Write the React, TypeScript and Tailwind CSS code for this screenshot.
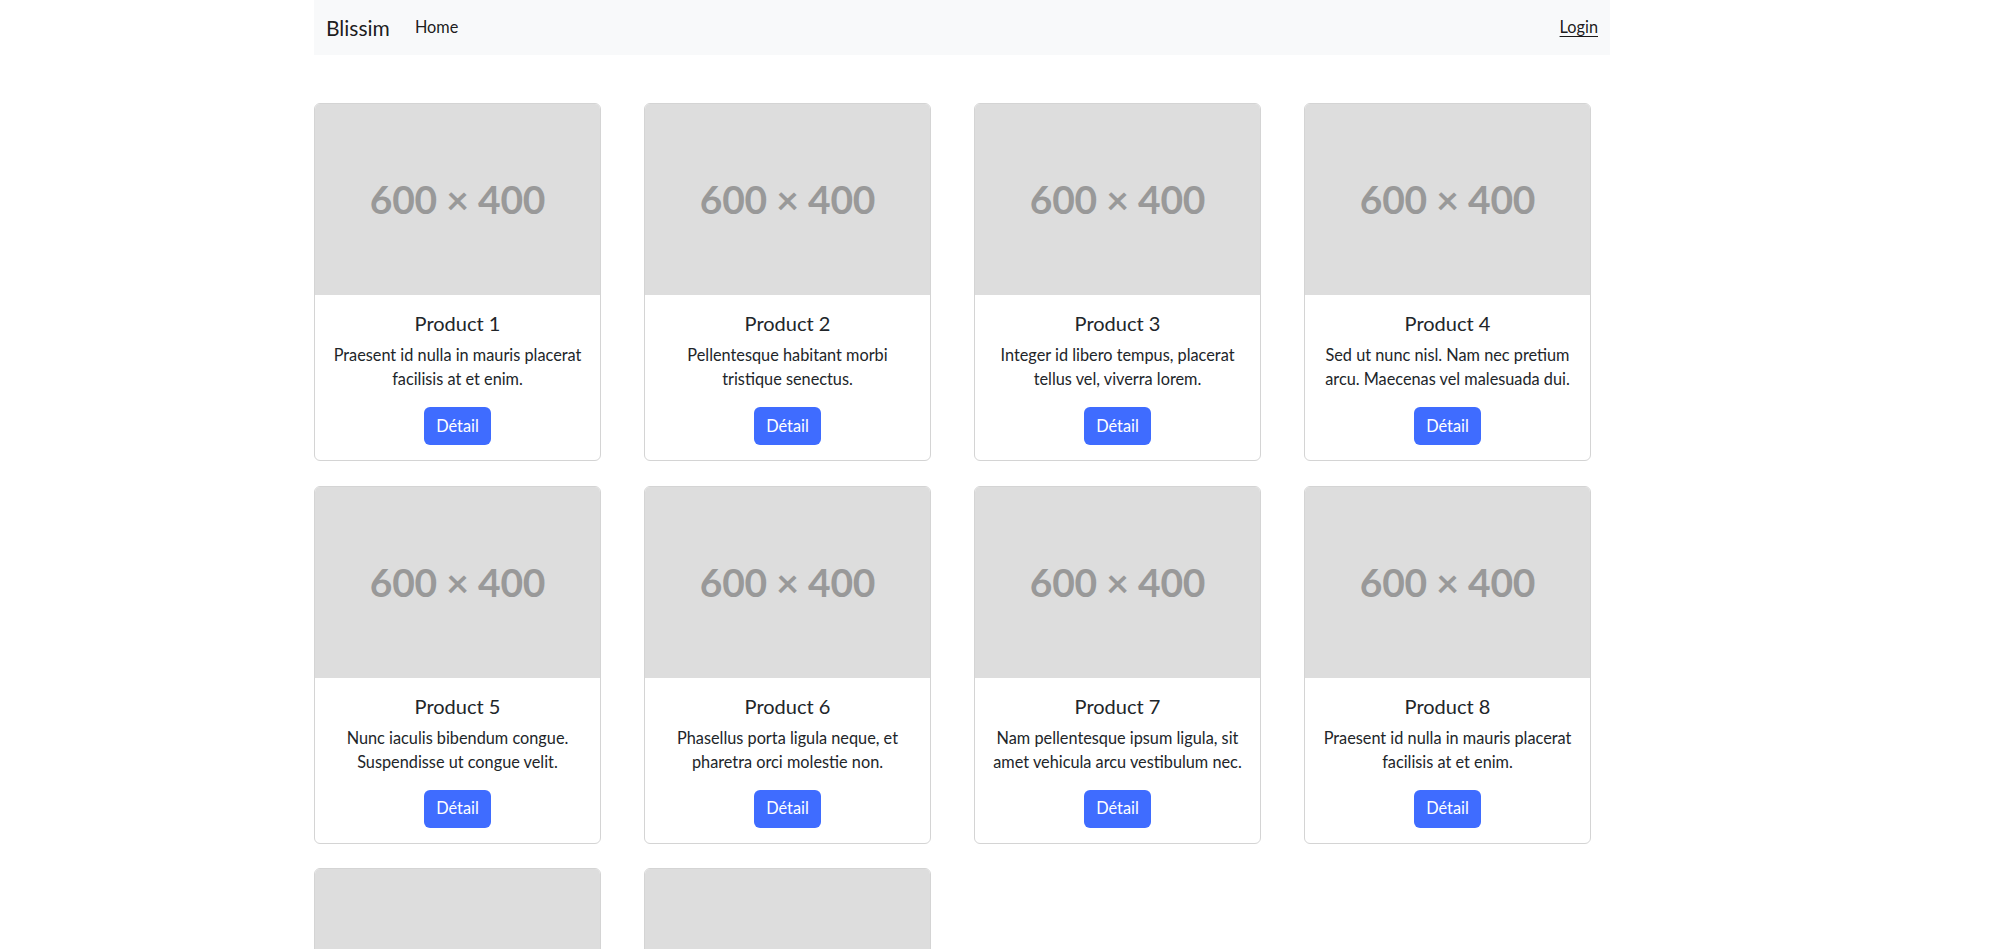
import React from "react";

const products = [
  { id: 1, name: "Product 1", text: "Praesent id nulla in mauris placerat facilisis at et enim." },
  { id: 2, name: "Product 2", text: "Pellentesque habitant morbi tristique senectus." },
  { id: 3, name: "Product 3", text: "Integer id libero tempus, placerat tellus vel, viverra lorem." },
  { id: 4, name: "Product 4", text: "Sed ut nunc nisl. Nam nec pretium arcu. Maecenas vel malesuada dui." },
  { id: 5, name: "Product 5", text: "Nunc iaculis bibendum congue. Suspendisse ut congue velit." },
  { id: 6, name: "Product 6", text: "Phasellus porta ligula neque, et pharetra orci molestie non." },
  { id: 7, name: "Product 7", text: "Nam pellentesque ipsum ligula, sit amet vehicula arcu vestibulum nec." },
  { id: 8, name: "Product 8", text: "Praesent id nulla in mauris placerat facilisis at et enim." },
  { id: 9, name: "Product 9", text: "Pellentesque habitant morbi tristique senectus." },
  { id: 10, name: "Product 10", text: "Integer id libero tempus, placerat tellus vel, viverra lorem." },
];

function ProductCard({ name, text }: { name: string; text: string }) {
  return (
    <div className="w-[287px] h-[358px] flex flex-col border border-[#d4d4d4] rounded-[6px] bg-white overflow-hidden">
      {/* placeholder image */}
      <div className="h-[191px] shrink-0 bg-[#dddddd] flex items-center justify-center">
        <span className="text-[39px] font-bold text-[#999999] tracking-[-0.2px]">600 × 400</span>
      </div>
      <div className="flex flex-col items-center p-4 text-center">
        <h5 className="text-[20px] leading-[24px] text-[#212529] mb-2">{name}</h5>
        <p className="text-[16.3px] leading-[24px] text-[#212529] mb-4">{text}</p>
        <a
          href="#"
          className="h-[38px] px-3 flex items-center rounded-[6px] bg-[#3f6cff] text-white text-[16.3px]"
        >
          Détail
        </a>
      </div>
    </div>
  );
}

export default function App() {
  return (
    <div className="min-h-screen bg-white font-['Lato',sans-serif] text-[#212529]">
      {/* Navbar */}
      <nav className="ml-[314px] w-[1296px] h-[55px] bg-[#f8f9fa] flex items-center justify-between px-3">
        <div className="flex items-center">
          <a href="#" className="text-[21px] text-black/90 mr-[25px]">
            Blissim
          </a>
          <a href="#" className="text-[16.3px] text-black/90">
            Home
          </a>
        </div>
        <a href="#" className="text-[16.3px] text-black/90 underline underline-offset-[3px]">
          Login
        </a>
      </nav>

      {/* Products grid */}
      <div className="ml-[314px] mt-12 grid grid-cols-[repeat(4,287px)] gap-x-[43px] gap-y-[24.5px] pb-10">
        {products.map((p) => (
          <ProductCard key={p.id} name={p.name} text={p.text} />
        ))}
      </div>
    </div>
  );
}
